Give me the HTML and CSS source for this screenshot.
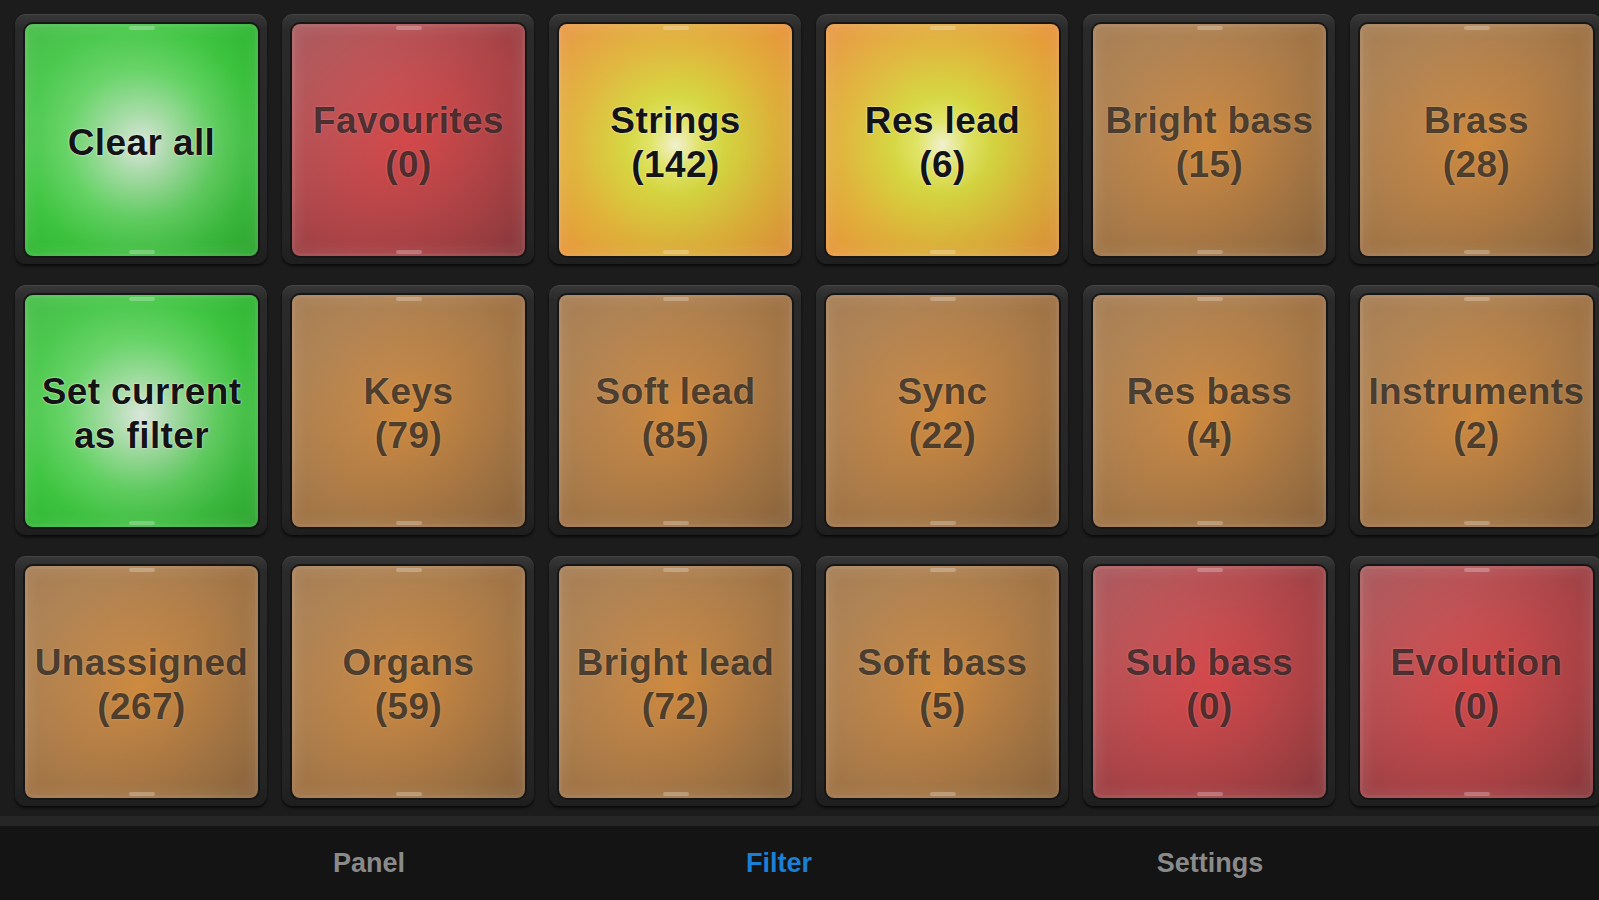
FILE: index.html
```html
<!doctype html>
<html>
<head>
  <title>Filter</title>
  <link rel="stylesheet" href="styles.css">
</head>
<body>

	<div class="pads">

		<div class="cell"><div class="pad green active"><span>Clear all</span></div></div>
		<div class="cell"><div class="pad red"><span>Favourites<br>(0)</span></div></div>
		<div class="cell"><div class="pad yellow active"><span>Strings<br>(142)</span></div></div>
		<div class="cell"><div class="pad yellow active"><span>Res lead<br>(6)</span></div></div>
		<div class="cell"><div class="pad brown"><span>Bright bass<br>(15)</span></div></div>
		<div class="cell"><div class="pad brown"><span>Brass<br>(28)</span></div></div>

		<div class="cell"><div class="pad green active"><span>Set current<br>as filter</span></div></div>
		<div class="cell"><div class="pad brown"><span>Keys<br>(79)</span></div></div>
		<div class="cell"><div class="pad brown"><span>Soft lead<br>(85)</span></div></div>
		<div class="cell"><div class="pad brown"><span>Sync<br>(22)</span></div></div>
		<div class="cell"><div class="pad brown"><span>Res bass<br>(4)</span></div></div>
		<div class="cell"><div class="pad brown"><span>Instruments<br>(2)</span></div></div>

		<div class="cell"><div class="pad brown"><span>Unassigned<br>(267)</span></div></div>
		<div class="cell"><div class="pad brown"><span>Organs<br>(59)</span></div></div>
		<div class="cell"><div class="pad brown"><span>Bright lead<br>(72)</span></div></div>
		<div class="cell"><div class="pad brown"><span>Soft bass<br>(5)</span></div></div>
		<div class="cell"><div class="pad red"><span>Sub bass<br>(0)</span></div></div>
		<div class="cell"><div class="pad red"><span>Evolution<br>(0)</span></div></div>

	</div>

	<div class="strip"></div>

	<div class="tabs">
		<div class="tab">Panel</div>
		<div class="tab selected">Filter</div>
		<div class="tab">Settings</div>
	</div>

</body>
</html>
```

FILE: styles.css
```css
	html, body {height: 100%}
	body {
		margin: 0;
		padding: 0;
		background: #1c1c1c;
		overflow: hidden;
		font-family: "Liberation Sans", Arial, sans-serif;
	}

	.pads {
		display: grid;
		grid-template-columns: repeat(6, 252px);
		grid-template-rows: repeat(3, 250px);
		column-gap: 15px;
		row-gap: 21px;
		padding: 14px 0 0 15px;
	}

	.cell {
		box-sizing: border-box;
		padding: 10px 9px 8px 10px;
		border-radius: 11px;
		background: linear-gradient(#383838, #2a2a2a 6%, #242424 90%, #1e1e1e);
		box-shadow: 0 2px 3px rgba(0,0,0,.7), inset 0 1px 0 rgba(255,255,255,.07);
	}

	.pad {
		position: relative;
		box-sizing: border-box;
		height: 100%;
		padding-top: 6px;
		border-radius: 8px;
		display: flex;
		align-items: center;
		justify-content: center;
		text-align: center;
		font-weight: bold;
		font-size: 37px;
		line-height: 44px;
		letter-spacing: 0.4px;
		color: rgba(0,0,0,.64);
		text-shadow: 0 0 2px rgba(255,255,255,.3);
		box-shadow: 0 0 0 2px #161616, inset 0 0 0 3px rgba(255,255,255,.05), inset 0 0 10px 9px rgba(255,255,255,.06);
	}
	.pad.active {
		color: #141414;
		text-shadow: 0 0 2px rgba(255,255,255,.8), 0 0 1px rgba(255,255,255,.7);
	}

	/* little light ticks top and bottom */
	.pad:before, .pad:after {
		content: "";
		position: absolute;
		left: 50%;
		width: 26px;
		height: 4px;
		margin-left: -13px;
		background: rgba(255,255,255,.25);
		border-radius: 2px;
	}
	.pad:before {top: 2px;}
	.pad:after {bottom: 2px;}

	.green {
		background:
			linear-gradient(135deg, rgba(255,255,255,.12), rgba(0,0,0,0) 50%, rgba(0,0,0,.1)),
			radial-gradient(circle at 50% 52%, #dbe6db 0%, #a9dca9 18%, #62d262 45%, #3dc43f 70%, #2db230 100%);
	}
	.red {
		background:
			linear-gradient(135deg, rgba(255,255,255,.14), rgba(0,0,0,0) 50%, rgba(0,0,0,.14)),
			radial-gradient(circle at 50% 50%, #d4484a 0%, #c0484b 40%, #ab4448 75%, #993f43 100%);
	}
	.yellow {
		background:
			linear-gradient(135deg, rgba(255,255,255,.06), rgba(0,0,0,0) 50%, rgba(0,0,0,.06)),
			radial-gradient(circle at 50% 52%, #f1f0d0 0%, #e0e466 15%, #d6d640 30%, #e0b43a 60%, #e8903a 100%);
	}
	.brown {
		background:
			linear-gradient(135deg, rgba(255,255,255,.1), rgba(0,0,0,0) 50%, rgba(0,0,0,.14)),
			radial-gradient(circle at 50% 52%, #cf8a3e 0%, #bb8246 35%, #a97a48 70%, #9a6e42 100%);
	}

	.strip {
		height: 10px;
		margin-top: 10px;
		background: #262626;
	}

	.tabs {
		height: 74px;
		display: grid;
		grid-template-columns: 410px 410px 452px;
		padding-left: 164px;
		align-items: center;
		background: #141414;
	}
	.tab {
		text-align: center;
		font-size: 27px;
		font-weight: bold;
		color: #8a8a8a;
	}
	.tab.selected {
		color: #1b7fd6;
	}
```
